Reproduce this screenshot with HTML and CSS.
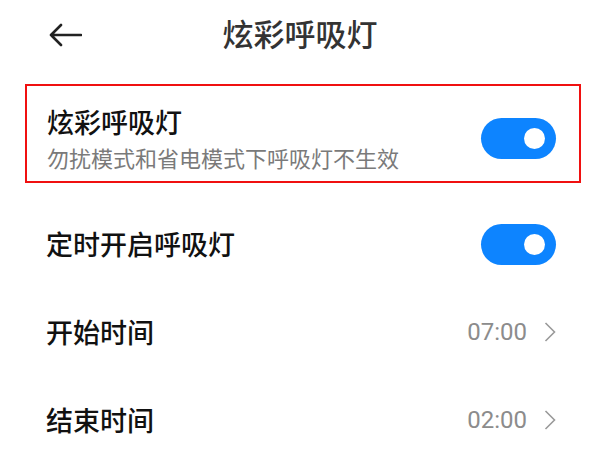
FILE: index.html
```html
<!doctype html>
<html>
<head>
<meta charset="utf-8">
<title>炫彩呼吸灯</title>
<link rel="stylesheet" href="styles.css">
</head>
<body>
	<div class="topbar">
		<div class="back">
			<svg width="34" height="24" viewBox="0 0 34 24">
				<path d="M33 12 H3 M13 2 L3 12 L13 22" fill="none" stroke="#222" stroke-width="2.6" stroke-linecap="round" stroke-linejoin="round"/>
			</svg>
		</div>
		<div class="title">炫彩呼吸灯</div>
		<div></div>
	</div>

	<div class="hilite">
		<div class="item-main">
			<div class="item-title">炫彩呼吸灯</div>
			<div class="item-desc">勿扰模式和省电模式下呼吸灯不生效</div>
		</div>
		<div class="switch on"><span class="knob"></span></div>
	</div>

	<div class="row first">
		<div class="item-title">定时开启呼吸灯</div>
		<div class="switch on"><span class="knob"></span></div>
	</div>
	<div class="row">
		<div class="item-title">开始时间</div>
		<div class="value">07:00
			<svg width="12" height="20" viewBox="0 0 12 20"><polyline points="1.5,1 10.5,10 1.5,19" fill="none" stroke="#9a9a9a" stroke-width="1.6"/></svg>
		</div>
	</div>
	<div class="row">
		<div class="item-title">结束时间</div>
		<div class="value">02:00
			<svg width="12" height="20" viewBox="0 0 12 20"><polyline points="1.5,1 10.5,10 1.5,19" fill="none" stroke="#9a9a9a" stroke-width="1.6"/></svg>
		</div>
	</div>
</body>
</html>
```

FILE: styles.css
```css
body{
	margin:0;
	background:#fff;
	font-family:"Noto Sans CJK SC","Noto Sans",sans-serif;
	color:#111;
}
.topbar{
	height:65px;
	display:grid;
	grid-template-columns:1fr auto 1fr;
	align-items:center;
}
.back{
	padding-left:48px;
	display:flex;
	align-items:center;
	padding-top:4px;
}
.title{
	font-size:31px;
	font-weight:500;
	color:#333;
	line-height:40px;
}
.hilite{
	margin:19px 19px 0 25px;
	border:2px solid #f01010;
	padding:19px 23px 10px 20px;
	display:flex;
	align-items:center;
	justify-content:space-between;
}
.item-title{
	font-size:27px;
	font-weight:500;
	line-height:34px;
	color:#111;
}
.item-desc{
	margin-top:4px;
	font-size:22px;
	line-height:28px;
	color:#7a7a7a;
}
.switch{
	width:75px;
	height:41px;
	border-radius:21px;
	background:#0d84ff;
	display:flex;
	align-items:center;
	justify-content:flex-end;
	padding-right:11px;
	box-sizing:border-box;
}
.knob{
	width:21px;
	height:21px;
	border-radius:50%;
	background:#fff;
}
.row{
	height:88px;
	padding:0 44px 0 46px;
	display:flex;
	align-items:center;
	justify-content:space-between;
}
.row.first{
	margin-top:17px;
}
.value{
	display:flex;
	align-items:center;
	gap:17px;
	font-family:Roboto,"Noto Sans",sans-serif;
	font-size:24px;
	color:#8c8c8c;
}
```
